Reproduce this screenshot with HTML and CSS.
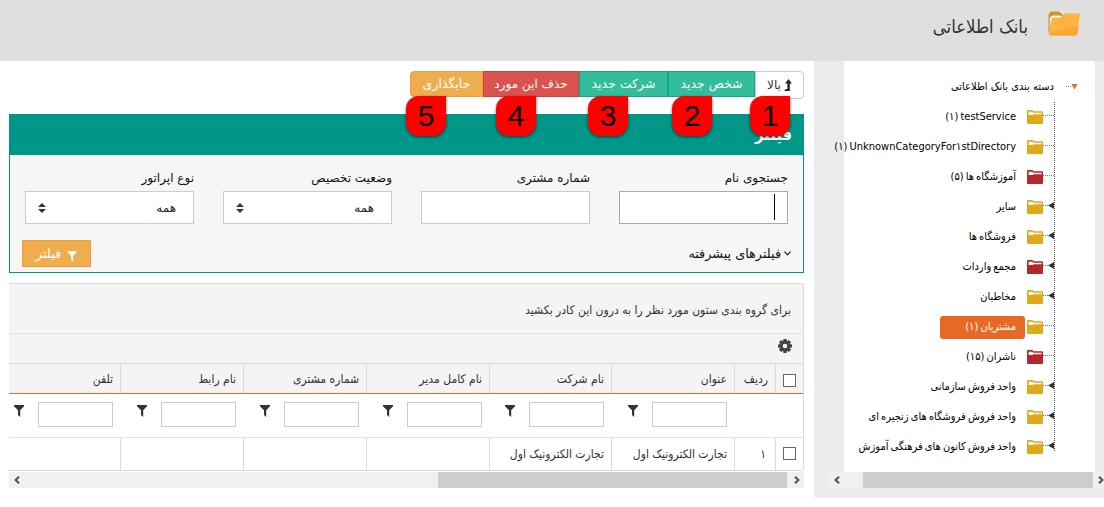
FILE: index.html
```html
<!DOCTYPE html>
<html lang="fa" dir="rtl">
<head>
<meta charset="utf-8">
<title>بانک اطلاعاتی</title>
<link rel="stylesheet" href="styles.css">
</head>
<body>
<svg width="0" height="0" class="defs">
  <symbol id="folder" viewBox="0 0 16 14"><path fill="currentColor" d="M0 1Q0 0 1 0H5.500L6.500 1.300H15Q16 1.300 16 2.300V13Q16 14 15 14H1Q0 14 0 13Z"/><path fill="#fffbf0" d="M1.600 1.800H5.200L6.400 2.700H14.600V4.200H6.600L5.600 5H1.600Z"/></symbol>
  <symbol id="funnel" viewBox="0 0 10 12"><path fill="currentColor" d="M0 0H10V1.2L6.2 5.2V12L4 10V5.2L0 1.2Z"/></symbol>
  <symbol id="left" viewBox="0 0 6 8"><path fill="none" stroke="#505050" stroke-width="2" d="M5 .7L1.6 4L5 7.3"/></symbol>
</svg>
<header class="top">
  <svg class="logo" viewBox="0 0 33 25"><path fill="#d2902c" d="M.5 22V4Q1 1 4 .5H9Q12 .5 14 3L16 6L4 20Z"/><path fill="#fffaf0" d="M1.800 20V8Q2 5 5 4.500H13L14 8L5 8Z"/><path fill="#fdb441" d="M2.500 24.500Q.8 24.500 1 22L3.500 8.500Q4 6.500 6 6.500H13L17 2.500H32L29.500 22.500Q29.200 24.500 27.500 24.500Z"/><path fill="#f9a732" d="M2.500 24.500Q.8 24.500 1 22L30.500 15L29.500 22.500Q29.200 24.500 27.500 24.500Z"/></svg>
  <h1><span>بانک اطلاعاتی</span></h1>
</header>
<div class="layout">
  <aside class="side">
    <div class="tree">
      <div class="root"><i class="open"></i><span>دسته بندی بانک اطلاعاتی</span></div>
      <ul>
        <li><i></i><svg><use href="#folder"/></svg><span><bdi>testService</bdi> (۱)</span></li>
        <li><i></i><svg><use href="#folder"/></svg><span><bdi>UnknownCategoryFor۱stDirectory</bdi> (۱)</span></li>
        <li class="red"><i></i><svg><use href="#folder"/></svg><span>آموزشگاه ها (۵)</span></li>
        <li><i class="more"></i><svg><use href="#folder"/></svg><span>سایر</span></li>
        <li><i class="more"></i><svg><use href="#folder"/></svg><span>فروشگاه ها</span></li>
        <li class="red"><i class="more"></i><svg><use href="#folder"/></svg><span>مجمع واردات</span></li>
        <li><i class="more"></i><svg><use href="#folder"/></svg><span>مخاطبان</span></li>
        <li class="active"><i></i><svg><use href="#folder"/></svg><span>مشتریان (۱)</span></li>
        <li class="red"><i></i><svg><use href="#folder"/></svg><span>ناشران (۱۵)</span></li>
        <li><i class="more"></i><svg><use href="#folder"/></svg><span>واحد فروش سازمانی</span></li>
        <li><i class="more"></i><svg><use href="#folder"/></svg><span>واحد فروش فروشگاه های زنجیره ای</span></li>
        <li><i class="more"></i><svg><use href="#folder"/></svg><span>واحد فروش کانون های فرهنگی آموزش</span></li>
      </ul>
    </div>
    <div class="scroll side-scroll"><svg class="flip"><use href="#left"/></svg><b></b><svg><use href="#left"/></svg></div>
  </aside>
  <main>
    <div class="buttons">
      <a class="up"><svg viewBox="0 0 8 12"><path fill="#222" d="M4.500 0L8 4.500H5.800V12H0L2 10H3.400V4.500H1Z"/></svg><span>بالا</span><em>1</em></a>
      <a class="person"><span>شخص جدید</span><em>2</em></a>
      <a class="company"><span>شرکت جدید</span><em>3</em></a>
      <a class="delete"><span>حذف این مورد</span><em>4</em></a>
      <a class="replace"><span>جایگذاری</span><em>5</em></a>
    </div>
    <section class="filter">
      <h2>فیلتر</h2>
      <div class="fields">
        <label><span>جستجوی نام</span><div class="input focus"><i></i></div></label>
        <label><span>شماره مشتری</span><div class="input"></div></label>
        <label><span>وضعیت تخصیص</span><div class="input select"><span>همه</span><svg viewBox="0 0 8 10"><path fill="#333" d="M0 4L4 0L8 4ZM0 6H8L4 10Z"/></svg></div></label>
        <label><span>نوع اپراتور</span><div class="input select"><span>همه</span><svg viewBox="0 0 8 10"><path fill="#333" d="M0 4L4 0L8 4ZM0 6H8L4 10Z"/></svg></div></label>
      </div>
      <div class="actions">
        <div class="adv"><svg viewBox="0 0 7 5"><path fill="none" stroke="#222" stroke-width="1.300" d="M.5 .6L3.500 3.900L6.500 .6"/></svg><span>فیلترهای پیشرفته</span></div>
        <a class="go"><svg><use href="#funnel"/></svg><span>فیلتر</span></a>
      </div>
    </section>
    <section class="grid">
      <div class="group"><span>برای گروه بندی ستون مورد نظر را به درون این کادر بکشید</span></div>
      <div class="tools"><svg viewBox="-7 -7 14 14"><g fill="#444"><circle r="5"/><path id="tooth" d="M-1.600-7H1.600L2-4H-2Z"/><use href="#tooth" transform="rotate(45)"/><use href="#tooth" transform="rotate(90)"/><use href="#tooth" transform="rotate(135)"/><use href="#tooth" transform="rotate(180)"/><use href="#tooth" transform="rotate(225)"/><use href="#tooth" transform="rotate(270)"/><use href="#tooth" transform="rotate(315)"/></g><circle r="2.300" fill="#f4f4f4"/></svg></div>
      <div class="row head"><div class="chk"><i></i></div><div><span>ردیف</span></div><div><span>عنوان</span></div><div><span>نام شرکت</span></div><div><span>نام کامل مدیر</span></div><div><span>شماره مشتری</span></div><div><span>نام رابط</span></div><div><span>تلفن</span></div></div>
      <div class="row filters"><div></div><div></div><div><i></i><svg><use href="#funnel"/></svg></div><div><i></i><svg><use href="#funnel"/></svg></div><div><i></i><svg><use href="#funnel"/></svg></div><div><i></i><svg><use href="#funnel"/></svg></div><div><i></i><svg><use href="#funnel"/></svg></div><div><i></i><svg><use href="#funnel"/></svg></div></div>
      <div class="row data"><div class="chk"><i></i></div><div><span>۱</span></div><div><span>تجارت الکترونیک اول</span></div><div><span>تجارت الکترونیک اول</span></div><div></div><div></div><div></div><div></div></div>
    </section>
    <div class="scroll main-scroll"><svg class="flip"><use href="#left"/></svg><b></b><svg><use href="#left"/></svg></div>
  </main>
</div>
</body>
</html>
```
FILE: styles.css
```css
* { box-sizing: border-box; }
body { margin: 0; height: 507px; overflow: hidden; background: #fff; color: #222; font: 11px/14px "DejaVu Sans Condensed", "DejaVu Sans", sans-serif; }
.defs { position: absolute; }
span { white-space: nowrap; }
svg { flex: none; display: block; }
.top { height: 61px; background: #dfdfdf; display: flex; align-items: flex-start; padding: 11px 23px 0 0; }
.logo { width: 33px; height: 25px; }
h1 { margin: 4px 20px 0 0; font-size: 18.4px; line-height: 24px; font-weight: 400; color: #333; }
.layout { display: flex; align-items: flex-start; }
.side { width: 290px; height: 437px; background: #ebebeb; border-radius: 0 0 0 3px; flex: none; }
.tree { width: 251px; height: 411px; margin-right: 9px; background: #fff; padding: 11px 0 0; color: #000; word-spacing: -1px; }
.root { height: 30px; display: flex; align-items: center; padding-right: 17px; word-spacing: 0; }
.open { width: 12px; height: 7px; margin-left: 12px; display: flex; align-items: flex-start; }
.open::before { content: ""; width: 7px; height: 6px; background: #cd7b41; clip-path: polygon(0 0, 100% 0, 50% 100%); }
.open::after { content: ""; width: 5px; margin-top: 2px; border-top: 1px dotted #777; }
ul { list-style: none; margin: 0 40px 0 0; padding: 0; height: 349px; border-right: 1px dotted #555; }
li { height: 30px; display: flex; align-items: center; color: #dfa91b; }
li i { flex: none; width: 11px; height: 4px; border-top: 1px dotted #777; position: relative; }
.more::before { content: ""; position: absolute; right: 0; top: -4px; width: 6px; height: 7px; background: #333; clip-path: polygon(0 50%, 100% 0, 100% 100%); }
li svg { width: 16px; height: 14px; margin-top: -1px; }
li span { color: #000; margin-right: 6px; padding: 4px 5px; height: 23px; }
li.red { color: #b5272d; }
.active span { background: #e66a25; color: #fff; border-radius: 3px; width: 85px; margin-right: 2px; padding-right: 9px; }
.scroll { display: flex; align-items: center; height: 16px; background: #f0f0f0; }
.scroll b { background: #cdcdcd; height: 16px; }
.scroll svg { width: 6px; height: 8px; }
.flip { transform: scaleX(-1); }
.side-scroll { width: 275px; }
.side-scroll b { width: 230px; margin: 0 5px 0 23px; }
main { width: 795px; margin-right: 10px; padding-top: 10px; flex: none; }
.buttons { display: flex; height: 43px; align-items: flex-start; }
.buttons a { height: 26px; position: relative; display: flex; align-items: center; justify-content: center; color: #fff; font-family: "DejaVu Sans", sans-serif; font-size: 12.5px; border: 1px solid; }
.buttons .up { width: 49px; height: 28px; border-color: #ccc; border-radius: 0 4px 4px 0; color: #333; gap: 3px; font-size: 12px; }
.up svg { width: 8px; height: 12px; }
.buttons .person { width: 87px; background: #33bd9b; border-color: #18a689; }
.buttons .company { width: 89px; background: #33bd9b; border-color: #18a689; }
.buttons .delete { width: 96px; background: #d9534f; border-color: #d43f3a; font-size: 12px; }
.buttons .replace { width: 73px; background: #f0ad4e; border-color: #eea236; border-radius: 4px 0 0 4px; }
em { position: absolute; top: 24px; width: 40px; height: 40px; background: #f00; color: #000; border-radius: 13px 0 13px 13px; font: 30px/40px "Liberation Sans", sans-serif; text-align: center; box-shadow: 0 1px 3px rgba(0,0,0,.6); z-index: 2; }
.up em { left: -6px; }
.person em { left: 3px; }
.company em { left: 8px; }
.delete em { left: 12px; }
.replace em { left: -5px; }
.filter { height: 159px; border: 1px solid #009688; background: #f6f6f6; }
h2 { margin: 0; height: 40px; background: #009688; color: #fff; font: bold 16.5px/40px "DejaVu Sans Condensed", sans-serif; padding-right: 11px; }
.fields { display: flex; gap: 29px; padding: 16px 15px 0 0; font: 12px/14px "DejaVu Sans", sans-serif; }
label { display: block; width: 169px; }
label > span { display: block; height: 20px; color: #111; }
.input { height: 33px; width: 169px; border: 1px solid #ccc; background: #fff; }
.focus { border-color: #aaa; padding: 2px 12px; }
.focus i { display: block; width: 1px; height: 26px; background: #000; }
.select { display: flex; align-items: center; justify-content: space-between; padding: 0 17px 0 12px; }
.select svg { width: 8px; height: 10px; }
.actions { display: flex; justify-content: space-between; margin: 16px 12px 0; align-items: flex-start; }
.adv { display: flex; align-items: center; gap: 3px; height: 27px; color: #111; font: 12.8px/14px "DejaVu Sans", sans-serif; }
.adv svg { width: 7px; height: 5px; }
.go { width: 69px; height: 27px; background: #f0ad4e; border: 1px solid #eea236; color: #fff; display: flex; align-items: center; justify-content: center; gap: 6px; font: 13px/14px "DejaVu Sans", sans-serif; }
.go svg { width: 10px; height: 11px; margin-top: 6px; }
.grid { margin-top: 10px; height: 188px; border: 1px solid #dadada; border-left: 0; border-bottom: 2px solid #d8d8d8; border-radius: 0 3px 3px 0; background: #f4f4f4; color: #333; font-size: 12px; }
.group { height: 50px; padding: 19px 12px 0 0; border-bottom: 1px solid #e2e2e2; }
.tools { height: 30px; padding: 5px 11px; border-bottom: 1px solid #dadada; }
.tools svg { width: 14px; height: 14px; }
.row { display: grid; grid-template-columns: 28px 41px 123px 122px 123px 123px 123px 111px; }
.row > div { border-left: 1px solid #dadada; padding-right: 7px; display: flex; align-items: center; }
.row > div:last-child { border-left: 0; }
.head { height: 30px; border-bottom: 1px solid #e66a25; }
.head .chk { padding-top: 3px; }
.row > .chk { padding-right: 7px; }
.chk i { width: 13px; height: 13px; border: 1px solid #666; background: #fff; }
.data .chk i { margin-top: -2px; }
.filters { height: 44px; background: #fff; border-bottom: 1px solid #e2e2e2; }
.filters > div { border-color: transparent; }
.filters i { width: 75px; height: 25px; border: 1px solid #ccc; margin-top: -2px; }
.filters svg { width: 10px; height: 12px; color: #333; margin: -9px 14px 0 0; }
.data { height: 32px; background: #fff; }
.data > div:nth-child(2) { padding-right: 9px; }
.main-scroll { margin-top: 1px; padding: 0 4px 0 5px; justify-content: space-between; }
.main-scroll b { width: 349px; margin: 0 7px 0 auto; }
```
